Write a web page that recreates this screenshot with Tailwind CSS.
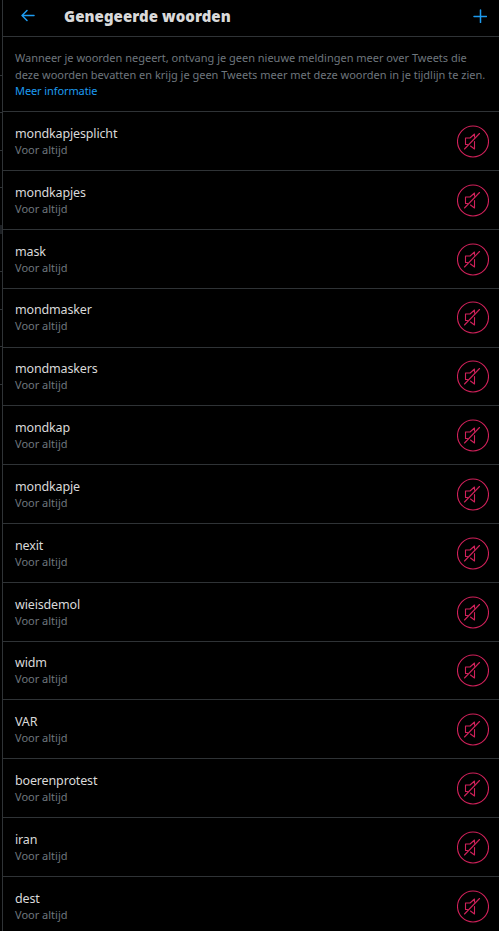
<!DOCTYPE html>
<html lang="nl">
<head>
  <meta charset="UTF-8" />
  <meta name="viewport" content="width=device-width, initial-scale=1.0"/>
  <title>Genegeerde woorden</title>
  <script src="https://cdn.jsdelivr.net/npm/@tailwindcss/browser@4"></script>
</head>
<body class="bg-black h-screen overflow-hidden flex font-['Noto_Sans','Open_Sans',sans-serif]">

  <!-- Edge of the settings menu -->
  <div class="w-[2px] shrink-0 pt-[75px]">
    <div class="h-[37px] border-t border-[#2f3336]"></div>
    <div class="h-[38px] border-t border-[#2f3336]"></div>
    <div class="h-[37px] border-t border-[#2f3336]"></div>
    <div class="h-[38px] border-t border-[#2f3336]"></div>
    <div class="h-[9px] bg-[#1c1f23]"></div>
    <div class="h-[37px]"></div>
    <div class="h-[38px] border-t border-[#2f3336]"></div>
    <div class="h-[37px] border-t border-[#2f3336]"></div>
    <div class="h-[38px] border-t border-[#2f3336]"></div>
    <div class="border-t border-[#2f3336]"></div>
  </div>

  <main class="flex-1 min-w-0 border-l border-[#2f3336]">
    <!-- Header -->
    <header class="h-[37px] flex items-center pl-[17px] pr-3 pb-[5px] border-b border-[#2f3336]">
      <a href="#" aria-label="Terug">
        <svg class="w-4 h-4 text-[#1d9bf0]" viewBox="0 0 16 16" fill="none" stroke="currentColor" stroke-width="1.5" stroke-linecap="round" stroke-linejoin="round">
          <path d="M14 7.5H2M7 2.5l-5 5 5 5"/>
        </svg>
      </a>
      <h1 class="ml-7 text-[15px] leading-5 font-black tracking-[0.05px] text-[#d9d9d9] whitespace-nowrap">Genegeerde woorden</h1>
      <a href="#" class="ml-auto" aria-label="Toevoegen">
        <svg class="w-[14px] h-[14px] text-[#1d9bf0]" viewBox="0 0 14 14" fill="none" stroke="currentColor" stroke-width="1.5" stroke-linecap="round">
          <path d="M7.5 1v12.5M1 7.5h12.5"/>
        </svg>
      </a>
    </header>

    <!-- Explanation -->
    <p class="h-[75.25px] px-3 pt-[13px] text-[11px] leading-[16.5px] tracking-[-0.01px] text-[#6e767d] whitespace-nowrap border-b border-[#2f3336]">
      Wanneer je woorden negeert, ontvang je geen nieuwe meldingen meer over Tweets die<br>
      deze woorden bevatten en krijg je geen Tweets meer met deze woorden in je tijdlijn te zien.<br>
      <a href="#" class="text-[#1d9bf0] tracking-[-0.1px]">Meer informatie</a>
    </p>

    <!-- Muted words -->
    <ul id="wordList"></ul>
  </main>

  <script>
    const words = [
      "mondkapjesplicht", "mondkapjes", "mask", "mondmasker", "mondmaskers",
      "mondkap", "mondkapje", "nexit", "wieisdemol", "widm", "VAR",
      "boerenprotest", "iran", "dest"
    ];

    document.getElementById("wordList").innerHTML = words.map(word => `
      <li class="h-[58.82px] flex items-start justify-between pl-3 pr-[10px] border-b border-[#2f3336]">
        <div class="pt-[12.75px]">
          <p class="text-[12.5px] leading-[18px] tracking-[-0.15px] text-[#d9d9d9]">${word}</p>
          <p class="-mt-px text-[11px] leading-4 text-[#6e767d]">Voor altijd</p>
        </div>
        <button class="mt-[12.75px] w-8 h-[33px]" aria-label="Niet meer negeren">
          <svg class="w-8 h-[33px] text-[#d0215a]" viewBox="0 0 32 33" fill="none" stroke="currentColor" stroke-width="1.1">
            <circle cx="16" cy="16.5" r="15.5"/>
            <path d="M7.5 24 22.5 8.5M17.5 12V9l-4.5 4H8.5v6.5h2M17.5 16.5V24l-4-3" stroke-linecap="round" stroke-linejoin="round"/>
          </svg>
        </button>
      </li>
    `).join("");
  </script>
</body>
</html>
